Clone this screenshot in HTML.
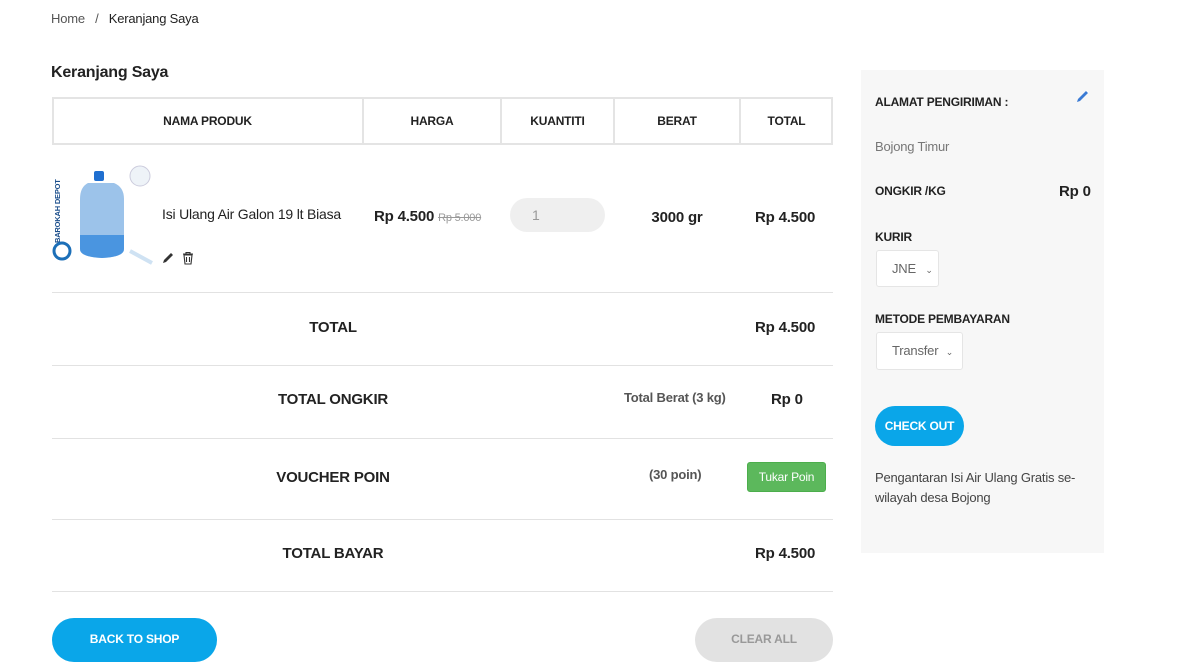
<!DOCTYPE html><html><head><style>
*{margin:0;padding:0;box-sizing:border-box}
body{width:1196px;height:651px;overflow:hidden;background:#fff;font-family:"Liberation Sans",sans-serif;color:#222;position:relative;letter-spacing:-0.2px}
.a{position:absolute;white-space:nowrap}
.b{font-weight:bold}
.hl{position:absolute;height:1px;background:#e2e2e2;left:52px;width:781px}
.c{text-align:center}
</style></head><body>
<div class="a" style="left:51px;top:11px;font-size:13px;color:#555">Home &nbsp;&nbsp;/&nbsp;&nbsp; <span style="color:#222">Keranjang Saya</span></div>
<div class="a b" style="left:51px;top:64px;font-size:16px;color:#222">Keranjang Saya</div>
<div style="position:absolute;left:52px;top:97px;width:781px;height:48px;border:2px solid #e4e4e4"></div>
<div style="position:absolute;left:362px;top:97px;width:2px;height:48px;background:#e4e4e4"></div>
<div style="position:absolute;left:500px;top:97px;width:2px;height:48px;background:#e4e4e4"></div>
<div style="position:absolute;left:613px;top:97px;width:2px;height:48px;background:#e4e4e4"></div>
<div style="position:absolute;left:739px;top:97px;width:2px;height:48px;background:#e4e4e4"></div>
<div class="a b c" style="left:52px;width:311px;top:114px;font-size:12px">NAMA PRODUK</div>
<div class="a b c" style="left:363px;width:138px;top:114px;font-size:12px">HARGA</div>
<div class="a b c" style="left:501px;width:113px;top:114px;font-size:12px">KUANTITI</div>
<div class="a b c" style="left:614px;width:126px;top:114px;font-size:12px">BERAT</div>
<div class="a b c" style="left:740px;width:93px;top:114px;font-size:12px">TOTAL</div>
<svg class="a" style="left:52px;top:165px" width="104" height="102">
<text x="8" y="78" transform="rotate(-90 8 78)" font-size="7.5" font-weight="bold" fill="#1c4f8c" font-family="Liberation Sans">BAROKAH DEPOT</text>
<circle cx="10" cy="86" r="8" fill="none" stroke="#1c6fb8" stroke-width="3"/>
<rect x="42" y="6" width="10" height="10" rx="2" fill="#1f6fd0"/>
<path d="M36 18 Q28 22 28 34 L28 84 Q28 92 50 93 Q72 92 72 84 L72 34 Q72 22 62 18 Z" fill="#9cc3ea"/>
<path d="M28 70 L72 70 L72 84 Q72 92 50 93 Q28 92 28 84Z" fill="#4a95e0"/>
<circle cx="88" cy="11" r="10" fill="#eef3f8" stroke="#ccd" />
<path d="M78 86 L100 98" stroke="#cfe2f3" stroke-width="4"/>
</svg>
<div class="a" style="left:162px;top:206px;font-size:14px">Isi Ulang Air Galon 19 lt Biasa</div>
<svg class="a" style="left:162px;top:251px" width="36" height="14">
<path d="M1 12 L2 9 L9 2 L11 4 L4 11 Z" fill="#333"/>
<path d="M21 3 h10 M24 3 V1.5 h4 V3 M22 4 h8 l-1 9 h-6 Z M24.5 6 v5 M27.5 6 v5" stroke="#333" fill="none" stroke-width="1.1"/>
</svg>
<div class="a" style="left:374px;top:208px;font-size:15px"><b>Rp 4.500</b> <span style="font-size:11px;color:#999;text-decoration:line-through">Rp 5.000</span></div>
<div class="a" style="left:510px;top:198px;width:95px;height:34px;border-radius:17px;background:#efefef;font-size:14px;color:#999;padding:9px 0 0 22px">1</div>
<div class="a b c" style="left:614px;width:126px;top:209px;font-size:15px">3000 gr</div>
<div class="a b" style="left:755px;top:209px;font-size:15px">Rp 4.500</div>
<div class="hl" style="top:292px"></div>
<div class="a b c" style="left:52px;width:562px;top:319px;font-size:15px">TOTAL</div>
<div class="a b" style="left:755px;top:319px;font-size:15px">Rp 4.500</div>
<div class="hl" style="top:365px"></div>
<div class="a b c" style="left:52px;width:562px;top:391px;font-size:15px">TOTAL ONGKIR</div>
<div class="a b" style="left:624px;top:390px;font-size:13px;color:#555">Total Berat (3 kg)</div>
<div class="a b" style="left:771px;top:391px;font-size:15px">Rp 0</div>
<div class="hl" style="top:438px"></div>
<div class="a b c" style="left:52px;width:562px;top:469px;font-size:15px">VOUCHER POIN</div>
<div class="a b" style="left:649px;top:467px;font-size:13px;color:#555">(30 poin)</div>
<div class="a" style="left:747px;top:462px;width:79px;height:30px;background:#5cb85c;border:1px solid #4cae4c;border-radius:3px;color:#fff;font-size:12px;text-align:center;line-height:28px">Tukar Poin</div>
<div class="hl" style="top:519px"></div>
<div class="a b c" style="left:52px;width:562px;top:545px;font-size:15px">TOTAL BAYAR</div>
<div class="a b" style="left:755px;top:545px;font-size:15px">Rp 4.500</div>
<div class="hl" style="top:591px"></div>
<div class="a b" style="left:52px;top:618px;width:165px;height:44px;border-radius:22px;background:#0aa6e9;color:#fff;font-size:12px;text-align:center;padding-top:14px">BACK TO SHOP</div>
<div class="a b" style="left:695px;top:618px;width:138px;height:44px;border-radius:22px;background:#e2e2e2;color:#999;font-size:12px;text-align:center;padding-top:14px">CLEAR ALL</div>
<div style="position:absolute;left:861px;top:70px;width:243px;height:483px;background:#f7f7f7"></div>
<div class="a b" style="left:875px;top:95px;font-size:12px">ALAMAT PENGIRIMAN :</div>
<svg class="a" style="left:1076px;top:89px" width="14" height="14"><path d="M1 13 L2 10 L10 2 L12 4 L4 12 Z" fill="#3a7bd5"/><path d="M10.5 1.5 L12.5 3.5" stroke="#fff" stroke-width="1"/></svg>
<div class="a" style="left:875px;top:139px;font-size:13px;color:#777">Bojong Timur</div>
<div class="a b" style="left:875px;top:184px;font-size:12px">ONGKIR /KG</div>
<div class="a b" style="left:1059px;top:183px;font-size:15px">Rp 0</div>
<div class="a b" style="left:875px;top:230px;font-size:12px">KURIR</div>
<div class="a" style="left:876px;top:250px;width:63px;height:37px;background:#fff;border:1px solid #e5e5e5;border-radius:3px;font-size:13px;color:#666;padding:10px 0 0 15px">JNE <span style="font-size:9px;margin-left:6px">⌄</span></div>
<div class="a b" style="left:875px;top:312px;font-size:12px">METODE PEMBAYARAN</div>
<div class="a" style="left:876px;top:332px;width:87px;height:38px;background:#fff;border:1px solid #e5e5e5;border-radius:3px;font-size:13px;color:#666;padding:10px 0 0 15px">Transfer <span style="font-size:9px;margin-left:4px">⌄</span></div>
<div class="a b" style="left:875px;top:406px;width:89px;height:40px;border-radius:20px;background:#0aa6e9;color:#fff;font-size:12px;text-align:center;padding-top:13px">CHECK OUT</div>
<div class="a" style="left:875px;top:468px;font-size:13px;line-height:20px;color:#444;white-space:normal;width:215px">Pengantaran Isi Air Ulang Gratis se-wilayah desa Bojong</div>
</body></html>
